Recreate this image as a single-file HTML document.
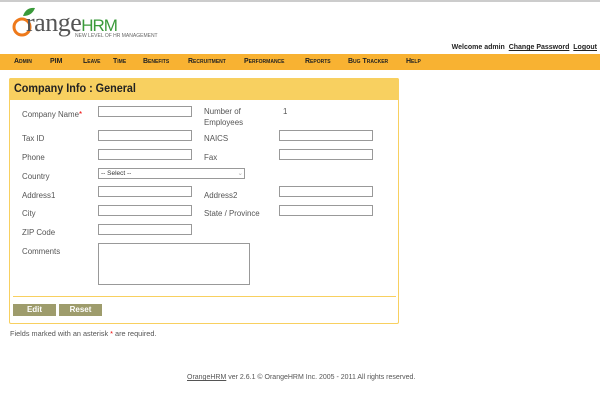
<!DOCTYPE html>
<html><head><style>
*{margin:0;padding:0;box-sizing:border-box}
body{width:600px;height:400px;background:#fff;font-family:"Liberation Sans",Arial,sans-serif;font-size:7.3px;color:#444;position:relative;overflow:hidden}
.a{position:absolute}
.topline{left:0;top:0;width:600px;height:2px;background:#ccc}
.nav{left:0;top:54px;width:600px;height:16px;background:#f8b232}
.nav span{position:absolute;top:4px;font-size:7px;font-weight:bold;color:#222;font-variant:small-caps}
.panel{left:9px;top:78px;width:390px;height:246px;border:1px solid #f8d060;border-radius:2px}
.hdr{left:9px;top:78px;width:390px;height:22px;background:#f8d060;border-radius:2px 2px 0 0}
.hdr b{position:absolute;left:5px;top:5px;font-size:11.5px;color:#222;transform:scaleX(.94);transform-origin:left}
.lbl{font-size:7.9px;color:#555}
.in{border:1px solid #999;background:#fff;height:11px;width:94px}
.btn{top:304px;height:12px;width:43px;background:#9e9c6c;color:#fff;font-weight:bold;font-size:8px;text-align:center;line-height:12px}
</style></head><body>
<div class="a topline"></div>
<svg class="a" style="left:6px;top:4px" width="30" height="34"><path d="M17 12 Q20 3 29 4 Q26 12 17 12Z" fill="#3a9a3a"/><circle cx="16" cy="23" r="8" fill="none" stroke="#ee7a1c" stroke-width="3"/></svg>
<div class="a" style="left:26px;top:8px;font-size:26px;color:#555;font-family:'Liberation Serif',serif;letter-spacing:-0.5px">range<span style="color:#3a9a3a;font-family:'Liberation Sans',sans-serif;font-size:17px;letter-spacing:-1px">HRM</span></div>
<div class="a" style="left:75px;top:33px;font-size:5px;color:#666">NEW LEVEL OF HR MANAGEMENT</div>
<div class="a" style="right:3px;top:44px;font-size:7px;color:#222;font-weight:bold">Welcome admin&nbsp; <u>Change Password</u>&nbsp; <u>Logout</u></div>
<div class="a nav">
<span style="left:14px">Admin</span><span style="left:50px">PIM</span><span style="left:83px">Leave</span><span style="left:113px">Time</span><span style="left:143px">Benefits</span><span style="left:188px">Recruitment</span><span style="left:244px">Performance</span><span style="left:305px">Reports</span><span style="left:348px">Bug Tracker</span><span style="left:406px">Help</span>
</div>
<div class="a panel"></div>
<div class="a hdr"><b>Company Info : General</b></div>
<div class="a lbl" style="left:22px;top:110px">Company Name<span style="color:#e00">*</span></div>
<div class="a in" style="left:98px;top:106px"></div>
<div class="a lbl" style="left:204px;top:106px;line-height:11px">Number of<br>Employees</div>
<div class="a lbl" style="left:283px;top:107px">1</div>
<div class="a lbl" style="left:22px;top:134px">Tax ID</div><div class="a in" style="left:98px;top:130px"></div>
<div class="a lbl" style="left:204px;top:134px">NAICS</div><div class="a in" style="left:279px;top:130px"></div>
<div class="a lbl" style="left:22px;top:153px">Phone</div><div class="a in" style="left:98px;top:149px"></div>
<div class="a lbl" style="left:204px;top:153px">Fax</div><div class="a in" style="left:279px;top:149px"></div>
<div class="a lbl" style="left:22px;top:172px">Country</div>
<div class="a in" style="left:98px;top:168px;width:147px;font-size:6.5px;line-height:9px;padding-left:2px;color:#333">-- Select --<span style="position:absolute;right:1px;top:0;color:#aaa">⌄</span></div>
<div class="a lbl" style="left:22px;top:191px">Address1</div><div class="a in" style="left:98px;top:186px"></div>
<div class="a lbl" style="left:204px;top:191px">Address2</div><div class="a in" style="left:279px;top:186px"></div>
<div class="a lbl" style="left:22px;top:209px">City</div><div class="a in" style="left:98px;top:205px"></div>
<div class="a lbl" style="left:204px;top:209px">State / Province</div><div class="a in" style="left:279px;top:205px"></div>
<div class="a lbl" style="left:22px;top:228px">ZIP Code</div><div class="a in" style="left:98px;top:224px"></div>
<div class="a lbl" style="left:22px;top:247px">Comments</div>
<div class="a in" style="left:98px;top:243px;width:152px;height:42px"></div>
<div class="a" style="left:13px;top:296px;width:383px;height:1px;background:#f8d060"></div>
<div class="a btn" style="left:13px">Edit</div>
<div class="a btn" style="left:59px">Reset</div>
<div class="a" style="left:10px;top:329px;font-size:7.3px;color:#555">Fields marked with an asterisk <span style="color:#e00">*</span> are required.</div>
<div class="a" style="left:187px;top:374px;font-size:7px;color:#555"><u>OrangeHRM</u> ver 2.6.1 © OrangeHRM Inc. 2005 - 2011 All rights reserved.</div>
</body></html>
